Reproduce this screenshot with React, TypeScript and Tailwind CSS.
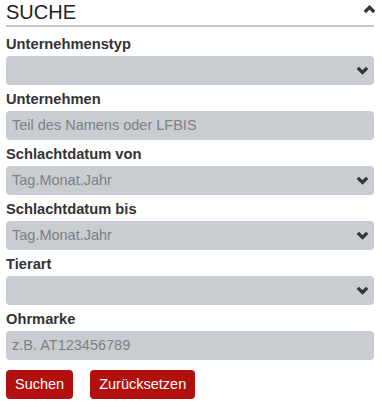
import React from 'react'

const ChevronDown = () => (
  <svg width="13" height="9" viewBox="0 0 13 9" className="block shrink-0">
    <path d="M1.8 1.8 L6.5 6.5 L11.2 1.8" fill="none" stroke="#353535" strokeWidth="3.2" />
  </svg>
)

const ChevronUp = () => (
  <svg width="13" height="9" viewBox="0 0 13 9" className="block shrink-0">
    <path d="M1.8 7 L6.5 2.3 L11.2 7" fill="none" stroke="#353535" strokeWidth="3.2" />
  </svg>
)

interface FieldProps {
  label: string
  placeholder?: string
  select?: boolean
}

function Field({ label, placeholder, select }: FieldProps) {
  return (
    <div className="flex flex-col">
      <label className="h-[20px] text-[14.7px] leading-[20px] font-bold text-[#333333] mb-[2px]">{label}</label>
      <div className="h-[29px] rounded-[4px] bg-[#c9cdd1] flex items-center justify-between pl-[6px] pr-[5px]">
        <span className="text-[14.5px] text-[#7d8084]">{placeholder ?? ''}</span>
        {select && <ChevronDown />}
      </div>
    </div>
  )
}

export default function App() {
  return (
    <div className="w-[382px] h-[407px] bg-white pl-[6px] pr-[8px] font-['Liberation_Sans',Arial,sans-serif]">
      {/* Header */}
      <div className="h-[27px] border-b-2 border-[#c8c8c8] flex items-start justify-between">
        <h2 className="text-[20px] leading-[24px] text-[#222222]">SUCHE</h2>
        <div className="pt-[5px] -mr-[2px]">
          <ChevronUp />
        </div>
      </div>

      <div className="flex flex-col gap-[4px] pt-[7px]">
        <Field label="Unternehmenstyp" select />
        <Field label="Unternehmen" placeholder="Teil des Namens oder LFBIS" />
        <Field label="Schlachtdatum von" placeholder="Tag.Monat.Jahr" select />
        <Field label="Schlachtdatum bis" placeholder="Tag.Monat.Jahr" select />
        <Field label="Tierart" select />
        <Field label="Ohrmarke" placeholder="z.B. AT123456789" />
      </div>

      <div className="flex gap-[17px] mt-[10px]">
        <button className="h-[29px] px-[9px] rounded-[4px] bg-[#b30f0f] text-white text-[14.5px]">Suchen</button>
        <button className="h-[29px] px-[9px] rounded-[4px] bg-[#b30f0f] text-white text-[14.5px]">Zurücksetzen</button>
      </div>
    </div>
  )
}
